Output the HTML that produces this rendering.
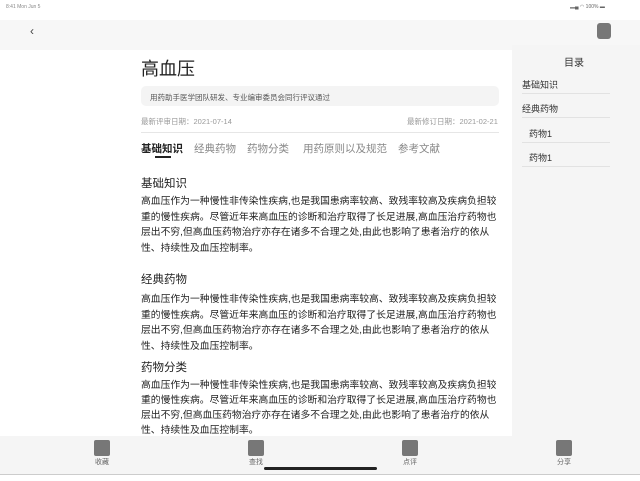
<!DOCTYPE html>
<html><head><meta charset="utf-8"><style>
*{margin:0;padding:0;box-sizing:border-box}
body{width:640px;height:481px;overflow:hidden;background:#fff;font-family:"Liberation Sans","Noto Sans CJK SC",sans-serif;color:#222;position:relative}
.a{position:absolute;white-space:nowrap}
.p{position:absolute;left:141px;font-size:9.8px;line-height:15.5px;color:#222;white-space:nowrap}
.h{position:absolute;left:141px;font-size:11.5px;color:#222}
.ln{position:absolute;left:522px;width:88px;height:1px;background:#e2e2e2}
.si{position:absolute;font-size:9px;color:#333}
.ic{position:absolute;top:440px;width:16px;height:16px;background:#777;border-radius:2px}
.lb{position:absolute;top:457px;font-size:7px;color:#666;width:40px;text-align:center}
</style></head><body>
<div class="a" style="left:6px;top:4px;font-size:5px;color:#888">8:41 Mon Jun 5</div>
<div class="a" style="left:570px;top:3px;font-size:5px;color:#666">▂▄ ◠ 100% ▬</div>
<div class="a" style="left:0;top:20px;width:640px;height:30px;background:#f7f7f7"></div>
<div class="a" style="left:30px;top:24px;font-size:12px;color:#444">‹</div>
<div class="a" style="left:597px;top:23px;width:14px;height:16px;background:#777;border-radius:3px"></div>
<div class="a" style="left:512px;top:45px;width:128px;height:395px;background:#f5f5f5"></div>
<div class="a" style="left:564px;top:54px;font-size:10px;color:#333">目录</div>
<div class="si" style="left:522px;top:78px">基础知识</div><div class="ln" style="top:93px"></div>
<div class="si" style="left:522px;top:102px">经典药物</div><div class="ln" style="top:117px"></div>
<div class="si" style="left:529px;top:127px">药物1</div><div class="ln" style="top:142px"></div>
<div class="si" style="left:529px;top:151px">药物1</div><div class="ln" style="top:166px"></div>

<div class="a" style="left:141px;top:55px;font-size:18px;color:#222">高血压</div>
<div class="a" style="left:141px;top:86px;width:358px;height:20px;background:#f4f4f4;border-radius:5px;font-size:7.5px;color:#555;padding:6px 0 0 9px">用药助手医学团队研发、专业编审委员会同行评议通过</div>
<div class="a" style="left:141px;top:116px;font-size:7.5px;color:#999">最新评审日期：2021-07-14</div>
<div class="a" style="left:407px;top:116px;font-size:7.5px;color:#999">最新修订日期：2021-02-21</div>
<div class="a" style="left:141px;top:132px;width:358px;height:1px;background:#e6e6e6"></div>
<div class="a" style="left:141px;top:141px;font-size:10.5px;color:#222;font-weight:bold">基础知识</div>
<div class="a" style="left:194px;top:141px;font-size:10.5px;color:#888">经典药物</div>
<div class="a" style="left:247px;top:141px;font-size:10.5px;color:#888">药物分类</div>
<div class="a" style="left:303px;top:141px;font-size:10.5px;color:#888">用药原则以及规范</div>
<div class="a" style="left:398px;top:141px;font-size:10.5px;color:#888">参考文献</div>
<div class="a" style="left:155px;top:156px;width:16px;height:2px;background:#222"></div>

<div class="h" style="top:175px">基础知识</div>
<div class="p" style="top:194px">高血压作为一种慢性非传染性疾病,也是我国患病率较高、致残率较高及疾病负担较<br>重的慢性疾病。尽管近年来高血压的诊断和治疗取得了长足进展,高血压治疗药物也<br>层出不穷,但高血压药物治疗亦存在诸多不合理之处,由此也影响了患者治疗的依从<br>性、持续性及血压控制率。</div>
<div class="h" style="top:271px">经典药物</div>
<div class="p" style="top:292px">高血压作为一种慢性非传染性疾病,也是我国患病率较高、致残率较高及疾病负担较<br>重的慢性疾病。尽管近年来高血压的诊断和治疗取得了长足进展,高血压治疗药物也<br>层出不穷,但高血压药物治疗亦存在诸多不合理之处,由此也影响了患者治疗的依从<br>性、持续性及血压控制率。</div>
<div class="h" style="top:359px">药物分类</div>
<div class="p" style="top:378px;line-height:15px">高血压作为一种慢性非传染性疾病,也是我国患病率较高、致残率较高及疾病负担较<br>重的慢性疾病。尽管近年来高血压的诊断和治疗取得了长足进展,高血压治疗药物也<br>层出不穷,但高血压药物治疗亦存在诸多不合理之处,由此也影响了患者治疗的依从<br>性、持续性及血压控制率。</div>

<div class="a" style="left:0;top:436px;width:640px;height:39px;background:#f5f5f5;border-bottom:1px solid #ccc"></div>
<div class="ic" style="left:94px"></div><div class="lb" style="left:82px">收藏</div>
<div class="ic" style="left:248px"></div><div class="lb" style="left:236px">查找</div>
<div class="ic" style="left:402px"></div><div class="lb" style="left:390px">点评</div>
<div class="ic" style="left:556px"></div><div class="lb" style="left:544px">分享</div>
<div class="a" style="left:264px;top:467px;width:113px;height:3px;background:#222;border-radius:2px"></div>
</body></html>
